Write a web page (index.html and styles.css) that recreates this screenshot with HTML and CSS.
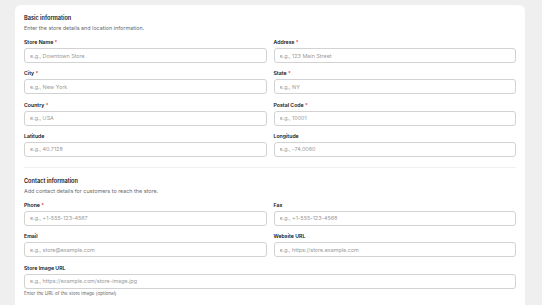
FILE: index.html
```html
<!DOCTYPE html>
<html lang="en">
<head>
    <meta charset="UTF-8">
    <meta name="viewport" content="width=device-width, initial-scale=1.0">
    <title>Store details</title>
    <link rel="stylesheet" href="styles.css">
</head>
<body>
    <div class="page">
        <form class="card">
            <section class="section">
                <h2 class="section-title">Basic information</h2>
                <p class="section-desc">Enter the store details and location information.</p>
                <div class="grid">
                    <div class="field">
                        <label>Store Name <span class="req">*</span></label>
                        <input type="text" placeholder="e.g., Downtown Store">
                    </div>
                    <div class="field">
                        <label>Address <span class="req">*</span></label>
                        <input type="text" placeholder="e.g., 123 Main Street">
                    </div>
                    <div class="field">
                        <label>City <span class="req">*</span></label>
                        <input type="text" placeholder="e.g., New York">
                    </div>
                    <div class="field">
                        <label>State <span class="req">*</span></label>
                        <input type="text" placeholder="e.g., NY">
                    </div>
                    <div class="field">
                        <label>Country <span class="req">*</span></label>
                        <input type="text" placeholder="e.g., USA">
                    </div>
                    <div class="field">
                        <label>Postal Code <span class="req">*</span></label>
                        <input type="text" placeholder="e.g., 10001">
                    </div>
                    <div class="field">
                        <label>Latitude</label>
                        <input type="text" placeholder="e.g., 40.7128">
                    </div>
                    <div class="field">
                        <label>Longitude</label>
                        <input type="text" placeholder="e.g., -74.0060">
                    </div>
                </div>
            </section>

            <hr class="divider">

            <section class="section">
                <h2 class="section-title">Contact information</h2>
                <p class="section-desc">Add contact details for customers to reach the store.</p>
                <div class="grid">
                    <div class="field">
                        <label>Phone <span class="req">*</span></label>
                        <input type="text" placeholder="e.g., +1-555-123-4567">
                    </div>
                    <div class="field">
                        <label>Fax</label>
                        <input type="text" placeholder="e.g., +1-555-123-4568">
                    </div>
                    <div class="field">
                        <label>Email</label>
                        <input type="text" placeholder="e.g., store@example.com">
                    </div>
                    <div class="field">
                        <label>Website URL</label>
                        <input type="text" placeholder="e.g., https://store.example.com">
                    </div>
                    <div class="field wide">
                        <label>Store Image URL</label>
                        <input type="text" placeholder="e.g., https://example.com/store-image.jpg">
                        <p class="hint">Enter the URL of the store image (optional)</p>
                    </div>
                </div>
            </section>
        </form>
    </div>
</body>
</html>
```

FILE: styles.css
```css
* {
    margin: 0;
    padding: 0;
    box-sizing: border-box;
    font-family: Inter, 'Noto Sans', sans-serif;
}

body {
    background-color: #efefef;
    color: #111111;
    height: 100vh;
    overflow: hidden;
}

.page {
    height: 100%;
    padding: 5px 17px 0 15px;
}

/* card runs off the bottom of the window, so no bottom corners */
.card {
    background: #ffffff;
    border-radius: 6px 6px 0 0;
    padding: 8px 9px 0;
    height: 100%;
}

.section-title {
    font-size: 5.6px;
    font-weight: 600;
    line-height: 10px;
}

.section-desc {
    font-size: 5.4px;
    line-height: 10px;
    color: #6b6b6b;
}

.grid {
    display: grid;
    grid-template-columns: 1fr 1fr;
    column-gap: 7px;
    row-gap: 6.33px;
    margin-top: 5px;
}

.field {
    display: flex;
    flex-direction: column;
}

.field.wide {
    grid-column: 1 / -1;
}

.field label {
    font-size: 5.2px;
    font-weight: 600;
    line-height: 8px;
    margin-bottom: 2px;
}

.req {
    color: #e5484d;
}

.field input {
    height: 15px;
    border: 1px solid #d2d2d2;
    border-radius: 3px;
    padding: 0 5px;
    font-size: 5.4px;
    color: #111111;
    background: #ffffff;
    outline: none;
}

.field input::placeholder {
    color: #9a9a9a;
}

.hint {
    font-size: 4.6px;
    line-height: 6px;
    color: #6b6b6b;
    margin-top: 2px;
}

.divider {
    border: none;
    height: 1px;
    background: #f0f0f0;
    margin: 10px 0 8px;
}
```
